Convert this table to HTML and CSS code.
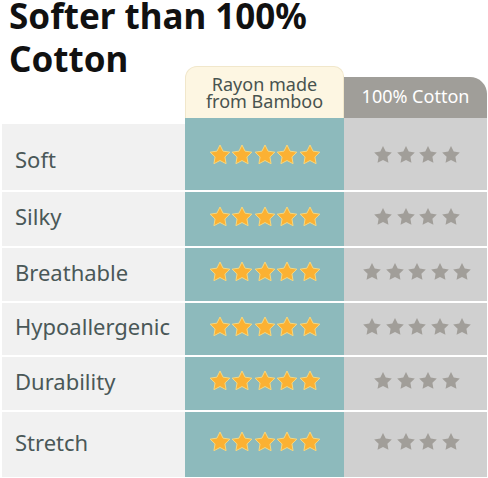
FILE: index.html
```html
<!DOCTYPE html>
<html lang="en">
<head>
  <meta charset="UTF-8">
  <meta name="viewport" content="width=device-width, initial-scale=1.0">
  <title>Softer than 100% Cotton</title>
  <link rel="stylesheet" href="styles.css">
</head>
<body>
  <svg width="0" height="0" class="defs">
    <symbol id="star" viewBox="2 2 20 19.3">
      <path d="M12 2l3.09 6.26L22 9.27l-5 4.87 1.18 6.88L12 17.77l-6.18 3.25L7 14.14 2 9.27l6.91-1.01L12 2z"/>
    </symbol>
  </svg>

  <h1 class="title">Softer than 100%<br>Cotton</h1>

  <div class="compare">
    <div class="head">
      <div></div>
      <div class="head-bamboo">Rayon made<br>from Bamboo</div>
      <div class="head-cotton">100% Cotton</div>
    </div>

    <div class="rows" id="rows">
      <!-- rows are filled in by the script below -->
    </div>
  </div>

  <script>
    const rows = [
      { name: "Soft", bamboo: 5, cotton: 4 },
      { name: "Silky", bamboo: 5, cotton: 4 },
      { name: "Breathable", bamboo: 5, cotton: 5 },
      { name: "Hypoallergenic", bamboo: 5, cotton: 5 },
      { name: "Durability", bamboo: 5, cotton: 4 },
      { name: "Stretch", bamboo: 5, cotton: 4 }
    ];

    function stars(count, cls) {
      let html = "";
      for (let i = 0; i < count; i++) {
        html += '<svg class="' + cls + '"><use href="#star"></use></svg>';
      }
      return html;
    }

    const rowsContainer = document.getElementById("rows");
    rows.forEach(function(row) {
      rowsContainer.innerHTML +=
        '<div class="cell label">' + row.name + '</div>' +
        '<div class="cell bamboo">' + stars(row.bamboo, "gold") + '</div>' +
        '<div class="cell cotton">' + stars(row.cotton, "grey") + '</div>';
    });
  </script>
</body>
</html>
```

FILE: styles.css
```css
body {
  margin: 0;
  padding: 0;
  background: #fff;
  font-family: "Noto Sans", "Open Sans", sans-serif;
}

.defs {
  position: absolute;
}

.title {
  margin: -6px 0 0;
  padding-left: 9px;
  font-size: 35px;
  line-height: 43px;
  font-weight: 700;
  color: #111;
}

.compare {
  margin: -14px 0 0 2px;
  width: 485px;
}

.head {
  display: grid;
  grid-template-columns: 183px 159px 143px;
  align-items: end;
  height: 52px;
}

.head-bamboo {
  box-sizing: border-box;
  height: 52px;
  padding-top: 9px;
  background: #fdf6e2;
  border: 1px solid #f1e7cb;
  border-bottom: none;
  border-radius: 12px 10px 0 0;
  color: #48534f;
  font-size: 18px;
  line-height: 17px;
  text-align: center;
}

.head-cotton {
  box-sizing: border-box;
  height: 41px;
  padding-top: 9px;
  background: #a09e99;
  border-radius: 0 17px 0 0;
  color: #fff;
  font-size: 18px;
  line-height: 20px;
  text-align: center;
}

.rows {
  display: grid;
  grid-template-columns: 183px 159px 143px;
  grid-template-rows: 72px 54px 53px 52px 53px 65px;
  row-gap: 2px;
}

.cell {
  display: flex;
  align-items: center;
  box-sizing: border-box;
  padding-bottom: 6px;
}

.label {
  padding-left: 13px;
  background: #f1f1f1;
  color: #4a5858;
  font-size: 22px;
}

.label:first-child {
  margin-top: 6px;
  padding: 4px 0 0 13px;
}

.bamboo {
  justify-content: center;
  gap: 2.5px;
  background: #8dbabc;
}

.cotton {
  justify-content: center;
  gap: 4.5px;
  background: #d0d0d0;
  padding-left: 3px;
}

.bamboo:nth-child(2),
.cotton:nth-child(3) {
  padding-bottom: 0;
}

.gold {
  width: 20px;
  height: 19px;
  overflow: visible;
  fill: #fbb133;
  stroke: #f7d77e;
  stroke-width: 1;
  stroke-linejoin: round;
}

.grey {
  width: 18px;
  height: 17px;
  fill: #a19e99;
}
```
